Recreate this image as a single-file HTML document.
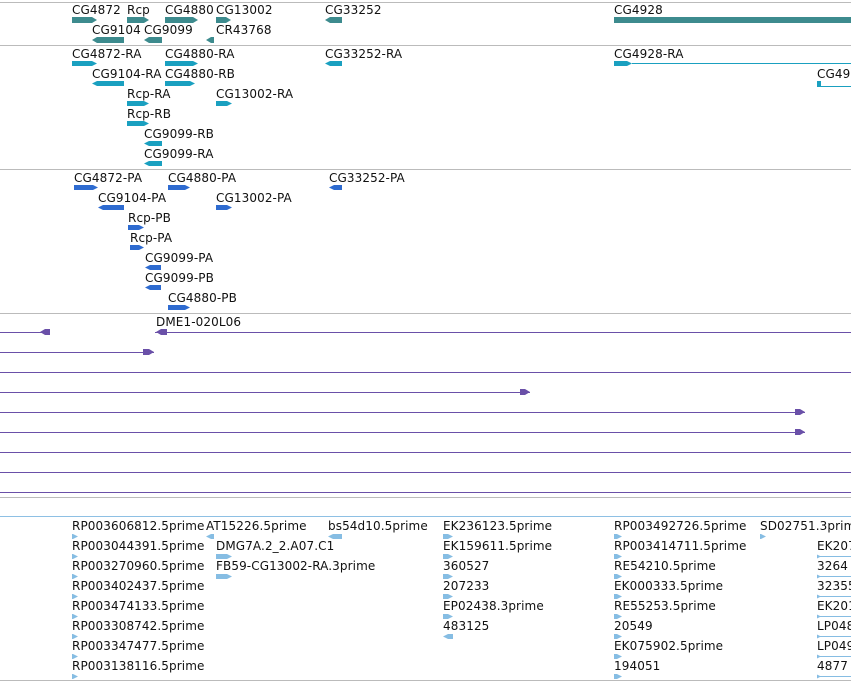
<!DOCTYPE html>
<html><head><meta charset="utf-8"><style>
body{margin:0;width:851px;height:681px;background:#fff;position:relative;overflow:hidden;font-family:"DejaVu Sans","Liberation Sans",sans-serif;font-size:12px;color:#111}
.l{position:absolute;white-space:nowrap;line-height:14px;letter-spacing:0.1px}
.b{position:absolute}
.r{clip-path:polygon(0 0,calc(100% - 5px) 0,100% 50%,calc(100% - 5px) 100%,0 100%)}
.lf{clip-path:polygon(5px 0,100% 0,100% 100%,5px 100%,0 50%)}
.h{position:absolute;left:0;width:851px;height:1px}
</style></head><body>
<div class="h" style="top:2px;background:#bbb"></div>
<div class="h" style="top:45px;background:#bbb"></div>
<div class="h" style="top:169px;background:#bbb"></div>
<div class="h" style="top:313px;background:#bbb"></div>
<div class="h" style="top:497px;background:#bbb"></div>
<div class="h" style="top:516px;background:#8ec0e4"></div>
<div class="h" style="top:680px;background:#bbb"></div>
<div id="c"></div>
<script>
var c=document.getElementById('c'),h='';
function L(t,x,y){h+='<div class="l" style="left:'+x+'px;top:'+(y+1)+'px">'+t+'</div>';}
function B(x,y,w,hh,col,d){h+='<div class="b '+(d||'')+'" style="left:'+x+'px;top:'+y+'px;width:'+w+'px;height:'+hh+'px;background:'+col+'"></div>';}
var T='#3d8b8e';
[['CG4872',72,2,72,25,'r'],['Rcp',127,2,127,22,'r'],['CG4880',165,2,165,33,'r'],['CG13002',216,2,216,15,'r'],['CG33252',325,2,325,17,'lf'],['CG4928',614,2,614,237,''],
 ['CG9104',92,22,92,32,'lf'],['CG9099',144,22,144,18,'lf'],['CR43768',216,22,206,8,'lf']].forEach(function(a){L(a[0],a[1],a[2]);B(a[3],a[2]+15,a[4],6,T,a[5]);});
var C='#1aa0c0';
[['CG4872-RA',72,46,72,25,'r'],['CG4880-RA',165,46,165,33,'r'],['CG33252-RA',325,46,325,17,'lf'],['CG4928-RA',614,46,614,18,'r'],
 ['CG9104-RA',92,66,92,32,'lf'],['CG4880-RB',165,66,165,30,'r'],['CG49',817,66,817,4,''],
 ['Rcp-RA',127,86,127,22,'r'],['CG13002-RA',216,86,216,16,'r'],['Rcp-RB',127,106,127,22,'r'],
 ['CG9099-RB',144,126,144,18,'lf'],['CG9099-RA',144,146,144,18,'lf']].forEach(function(a){L(a[0],a[1],a[2]);B(a[3],a[2]+15,a[4],5,C,a[5]);});
B(632,63,219,1,C);B(817,86,34,1,C);
var P='#2e6bd0';
[['CG4872-PA',74,170,74,24,'r'],['CG4880-PA',168,170,168,22,'r'],['CG33252-PA',329,170,329,13,'lf'],
 ['CG9104-PA',98,190,98,26,'lf'],['CG13002-PA',216,190,216,16,'r'],['Rcp-PB',128,210,128,16,'r'],['Rcp-PA',130,230,130,14,'r'],
 ['CG9099-PA',145,250,145,16,'lf'],['CG9099-PB',145,270,145,16,'lf'],['CG4880-PB',168,290,168,22,'r']].forEach(function(a){L(a[0],a[1],a[2]);B(a[3],a[2]+15,a[4],5,P,a[5]);});
var V='#6a50a8';
B(0,332,50,1,V);B(40,329,10,6,V,'lf');B(155,332,696,1,V);B(156,329,11,6,V,'lf');L('DME1-020L06',156,314);
B(0,352,154,1,V);B(143,349,11,6,V,'r');
B(0,372,851,1,V);B(0,392,530,1,V);B(520,389,10,6,V,'r');
B(0,412,805,1,V);B(795,409,10,6,V,'r');B(0,432,805,1,V);B(795,429,10,6,V,'r');
B(0,452,851,1,V);B(0,472,851,1,V);B(0,492,851,1,V);
var E='#86bde3';
function col(x,arr,w,d){arr.forEach(function(t,i){var y=518+i*20;if(t){L(t,x,y);B(x,y+16,w||6,5,E,d||'r');}});}
col(72,['RP003606812.5prime','RP003044391.5prime','RP003270960.5prime','RP003402437.5prime','RP003474133.5prime','RP003308742.5prime','RP003347477.5prime','RP003138116.5prime']);
col(206,['AT15226.5prime'],8,'lf');col(216,['','DMG7A.2_2.A07.C1','FB59-CG13002-RA.3prime'],16);
col(328,['bs54d10.5prime'],14,'lf');
col(443,['EK236123.5prime','EK159611.5prime','360527','207233','EP02438.3prime'],10);
L('483125',443,618);B(443,634,10,5,E,'lf');
col(614,['RP003492726.5prime','RP003414711.5prime','RE54210.5prime','EK000333.5prime','RE55253.5prime','20549','EK075902.5prime','194051'],8);
col(760,['SD02751.3prime']);
col(817,['','EK207','3264','32355','EK201','LP048','LP049','4877'],4);
for(var i=1;i<8;i++)B(817,538+i*20-20+17+1,34,1,E);
c.innerHTML=h;
</script>
</body></html>
